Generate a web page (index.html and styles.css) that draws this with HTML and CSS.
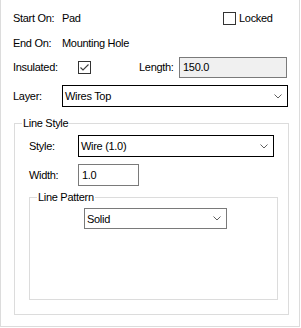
FILE: index.html
```html
<!DOCTYPE html>
<html>
<head>
<meta charset="utf-8">
<link rel="stylesheet" href="styles.css">
</head>
<body>
<div class="panel">
  <div class="row r1">
    <span class="lbl">Start On:</span><span class="val">Pad</span>
    <span class="chk"><span class="box"></span><span class="chk-text">Locked</span></span>
  </div>
  <div class="row r2">
    <span class="lbl">End On:</span><span class="val">Mounting Hole</span>
  </div>
  <div class="row r3">
    <span class="lbl lbl-ins">Insulated:</span>
    <span class="box"><svg width="11" height="11" viewBox="0 0 11 11"><polyline points="1.5,5.5 4,8 9.5,2.5" fill="none" stroke="#3c3c3c" stroke-width="1.1"/></svg></span>
    <span class="len-lbl">Length:</span>
    <div class="field ro len">150.0</div>
  </div>
  <div class="row r4">
    <span class="lbl">Layer:</span>
    <div class="select dark layer"><span>Wires Top</span><svg class="chev" width="8" height="5" viewBox="0 0 8 5"><polyline points="0.5,0.5 4,4 7.5,0.5" fill="none" stroke="#606060" stroke-width="1"/></svg></div>
  </div>
  <fieldset class="group ls">
    <legend>Line Style</legend>
    <div class="row r5">
      <span class="lbl2">Style:</span>
      <div class="select dark style"><span>Wire (1.0)</span><svg class="chev" width="8" height="5" viewBox="0 0 8 5"><polyline points="0.5,0.5 4,4 7.5,0.5" fill="none" stroke="#606060" stroke-width="1"/></svg></div>
    </div>
    <div class="row r6">
      <span class="lbl2">Width:</span>
      <div class="field width">1.0</div>
    </div>
    <fieldset class="group lp">
      <legend>Line Pattern</legend>
      <div class="select gray solid"><span>Solid</span><svg class="chev" width="8" height="5" viewBox="0 0 8 5"><polyline points="0.5,0.5 4,4 7.5,0.5" fill="none" stroke="#606060" stroke-width="1"/></svg></div>
    </fieldset>
  </fieldset>
</div>
</body>
</html>
```

FILE: styles.css
```css
html, body {
  margin: 0;
  padding: 0;
  background: #ffffff;
}
body {
  font-family: "Liberation Sans", Arial, sans-serif;
  font-size: 11px;
  letter-spacing: -0.3px;
  color: #000000;
}
.panel {
  box-sizing: border-box;
  width: 300px;
  height: 327px;
  border-left: 1px solid #dcdcdc;
  border-right: 1px solid #dcdcdc;
  border-bottom: 1px solid #dcdcdc;
  padding: 7px 0 0 12px;
  display: flex;
  flex-direction: column;
}
.row {
  display: flex;
  align-items: center;
  height: 22px;
}
.r2 { margin-top: 3px; }
.r3 { margin-top: 2px; }
.r4 { margin-top: 7px; }
.lbl {
  width: 49px;
  flex: none;
}
.lbl-ins { width: 65px; }
.val {
  width: 161px;
  flex: none;
}
.chk {
  display: flex;
  align-items: center;
}
.chk-text { margin-left: 3px; }
.box {
  box-sizing: border-box;
  width: 13px;
  height: 13px;
  border: 1px solid #333333;
  background: #ffffff;
  flex: none;
  display: flex;
  align-items: center;
  justify-content: center;
}
.box svg { display: block; }
.len-lbl {
  margin-left: 48px;
  width: 40px;
  flex: none;
}
.field {
  box-sizing: border-box;
  height: 21px;
  border: 1px solid #7a7a7a;
  padding: 0 0 0 3px;
  display: flex;
  align-items: center;
  background: #ffffff;
}
.field.ro { background: #f0f0f0; }
.len { width: 108px; }
.select {
  box-sizing: border-box;
  height: 22px;
  border: 1px solid #7a7a7a;
  background: #ffffff;
  display: flex;
  align-items: center;
  justify-content: space-between;
  padding: 0 5px 0 2px;
}
.select.dark { border-color: #000000; }
.chev { display: block; }
.layer { width: 226px; }
.group {
  margin: 0;
  padding: 0;
  border: 1px solid #dcdcdc;
  min-width: 0;
}
.group legend {
  padding: 0 1px;
  line-height: 16px;
  height: 16px;
}
.ls {
  margin-top: 8px;
  margin-left: 1px;
  width: 275px;
  box-sizing: border-box;
  padding: 4px 0 14px 14px;
}
.ls legend { margin-left: -7px; }
.lbl2 {
  width: 49px;
  flex: none;
}
.style { width: 196px; }
.r6 { margin-top: 7px; }
.width { width: 61px; height: 22px; }
.lp {
  margin-top: 3px;
  width: 249px;
  box-sizing: border-box;
  padding: 3px 0 70px 54px;
}
.lp legend { margin-left: -47px; }
.solid {
  width: 143px;
  height: 21px;
}
```
